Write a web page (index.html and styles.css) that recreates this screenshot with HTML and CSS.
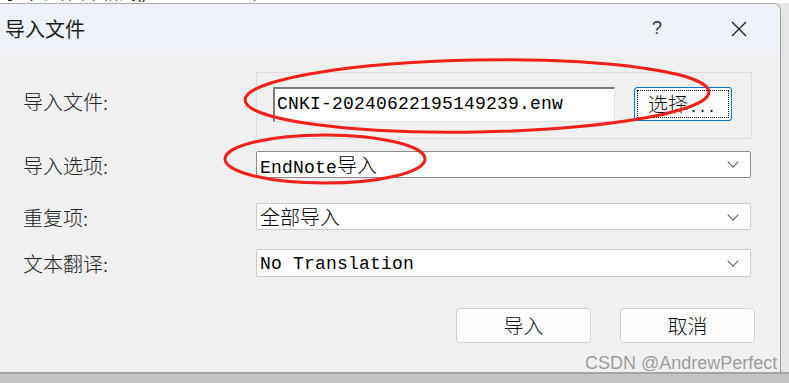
FILE: index.html
```html
<!DOCTYPE html>
<html lang="zh-CN">
<head>
    <meta charset="UTF-8">
    <meta name="viewport" content="width=device-width, initial-scale=1.0">
    <title>导入文件</title>
    <link rel="stylesheet" href="styles.css">
</head>
<body>
    <div class="screen">
        <!-- window behind the dialog, only its last text line shows -->
        <div class="behind">
            <div class="behind-line">
                <span class="b1">导出为计文本格式()</span>
                <span class="b2">新疆</span>
                <span class="b3">2024/6/17</span>
                <span class="b4">i ,. ! l</span>
            </div>
        </div>

        <div class="dialog">
            <div class="titlebar">
                <span class="title">导入文件</span>
                <span class="help">?</span>
                <span class="close">
                    <svg width="16" height="16" viewBox="0 0 16 16">
                        <path d="M1 1 L15 15 M15 1 L1 15" stroke="#1f1f1f" stroke-width="1.3" fill="none"/>
                    </svg>
                </span>
            </div>

            <div class="content">
                <div class="row row-file">
                    <label class="label">导入文件:</label>
                    <div class="groupbox">
                        <div class="textbox mono">CNKI-20240622195149239.enw</div>
                        <button class="browse"><span class="focus">选择<span class="dots">...</span></span></button>
                    </div>
                </div>

                <div class="row row-option">
                    <label class="label">导入选项:</label>
                    <div class="select active"><span class="value"><span class="mono">EndNote</span><span class="cjk">导入</span></span></div>
                </div>

                <div class="row row-dup">
                    <label class="label">重复项:</label>
                    <div class="select"><span class="value"><span class="cjk">全部导入</span></span></div>
                </div>

                <div class="row row-trans">
                    <label class="label">文本翻译:</label>
                    <div class="select"><span class="value"><span class="mono">No Translation</span></span></div>
                </div>

                <div class="actions">
                    <button class="btn">导入</button>
                    <button class="btn">取消</button>
                </div>
            </div>
        </div>

        <div class="below"></div>

        <!-- red marks drawn over the screenshot -->
        <svg class="marks" width="789" height="383" viewBox="0 0 789 383">
            <ellipse cx="477" cy="96" rx="232" ry="36" transform="rotate(-1 477 96)" fill="none" stroke="#f0201a" stroke-width="3"/>
            <ellipse cx="325" cy="159" rx="100" ry="24" fill="none" stroke="#f0201a" stroke-width="3"/>
        </svg>

        <div class="watermark">CSDN @AndrewPerfect</div>
    </div>
</body>
</html>
```

FILE: styles.css
```css
body {
    margin: 0;
    padding: 0;
    background-color: #e4e4e4;
    font-family: "Noto Sans CJK SC", sans-serif;
    color: #1a1a1a;
}
.screen {
    position: relative;
    width: 789px;
    height: 383px;
    overflow: hidden;
    background-color: #e6e6e6;
}
.behind {
    height: 3px;
    overflow: hidden;
    background: #fff;
}
.behind-line {
    margin-top: -19px;
    height: 22px;
    font-size: 17px;
    line-height: 22px;
    white-space: nowrap;
    color: #111;
    display: flex;
}
.b1 { width: 241px; }
.b2 { width: 131px; }
.b3 { width: 302px; font-family: "Liberation Sans", sans-serif; }
.b4 { letter-spacing: 10px; font-family: "Liberation Sans", sans-serif; }

.dialog {
    width: 780px;
    background-color: #f0f0f0;
    border-top: 1px solid #a8a8a8;
    border-right: 1px solid #9c9c9c;
    border-top-right-radius: 8px;
    overflow: hidden;
}
.titlebar {
    height: 49px;
    background-color: #eef2f8;
    display: flex;
    align-items: center;
}
.title {
    margin-left: 5px;
    font-size: 20px;
    color: #1c1c1c;
    flex: 1;
}
.help {
    font-family: "Liberation Sans", sans-serif;
    font-size: 18px;
    color: #333;
    margin-right: 69px;
}
.close {
    display: flex;
    margin-right: 33px;
}

.content {
    padding: 0 0 29px 23px;
}
.row {
    display: flex;
    align-items: center;
}
.label {
    width: 233px;
    font-size: 20px;
    line-height: 24px;
    color: #222;
    font-weight: 300;
}
.row-file { margin-top: 19px; }
.row-file .label { margin-top: -8px; }
.row-option { margin-top: 11px; }
.row-option .label { margin-top: 4px; }
.row-dup { margin-top: 25px; }
.row-dup .label { margin-top: 3px; }
.row-trans { margin-top: 19px; }
.row-trans .label { margin-top: 2px; }

.groupbox {
    width: 478px;
    height: 51px;
    border: 1px solid #dcdcdc;
    padding: 14px 0 0 16px;
    display: flex;
    align-items: flex-start;
}
.mono {
    font-family: "Liberation Mono", monospace;
    font-size: 18px;
    letter-spacing: 0.2px;
}
.cjk {
    font-family: "Noto Sans CJK SC", sans-serif;
    font-size: 20px;
    font-weight: 300;
}
.textbox {
    width: 342px;
    box-sizing: border-box;
    height: 35px;
    background: #fff;
    border-top: 2px solid #7c7c7c;
    border-left: 2px solid #7c7c7c;
    border-right: 1px solid #e2e2e2;
    border-bottom: 1px solid #e2e2e2;
    padding-left: 2px;
    line-height: 31px;
    color: #000;
}
.browse {
    margin-left: 19px;
    width: 98px;
    height: 34px;
    padding: 2px;
    background: #fdfdfd;
    border: 1px solid #0a74d0;
    border-radius: 3px;
    font-family: "Noto Sans CJK SC", sans-serif;
    font-size: 20px;
    font-weight: 300;
    color: #111;
    display: flex;
}
.focus {
    flex: 1;
    border: 1px dotted #000;
    display: flex;
    align-items: center;
    justify-content: center;
    line-height: 1;
}
.dots {
    letter-spacing: 4px;
    margin-left: 3px;
}

.select {
    width: 495px;
    height: 27px;
    box-sizing: border-box;
    background: #fff;
    border: 1px solid #cbcbcb;
    border-radius: 2px;
    padding-left: 3px;
    color: #000;
    position: relative;
}
.select.active {
    border-color: #8a8a8a;
}
.row-trans .select {
    height: 28px;
}
.value {
    display: block;
    line-height: 25px;
    white-space: nowrap;
}
.select::after {
    content: "";
    position: absolute;
    right: 13px;
    top: 50%;
    width: 7px;
    height: 7px;
    margin-top: -6px;
    border-right: 1px solid #5a5a5a;
    border-bottom: 1px solid #5a5a5a;
    transform: rotate(45deg);
}

.actions {
    margin-top: 31px;
    padding-left: 433px;
    display: flex;
    gap: 29px;
}
.btn {
    width: 135px;
    height: 35px;
    background: #fdfdfd;
    border: 1px solid #d0d0d0;
    border-radius: 4px;
    font-family: "Noto Sans CJK SC", sans-serif;
    font-size: 20px;
    font-weight: 300;
    color: #111;
    padding: 0;
}

.below {
    height: 9px;
    border-top: 2px solid #a4a4a4;
    background: #c3c3c3;
}

.marks {
    position: absolute;
    left: 0;
    top: 0;
    pointer-events: none;
}
.watermark {
    position: absolute;
    left: 585px;
    top: 353px;
    font-family: "Liberation Sans", sans-serif;
    font-size: 18px;
    color: #9a9a9a;
    text-shadow: 0 0 1px #fff;
    white-space: nowrap;
}
```
